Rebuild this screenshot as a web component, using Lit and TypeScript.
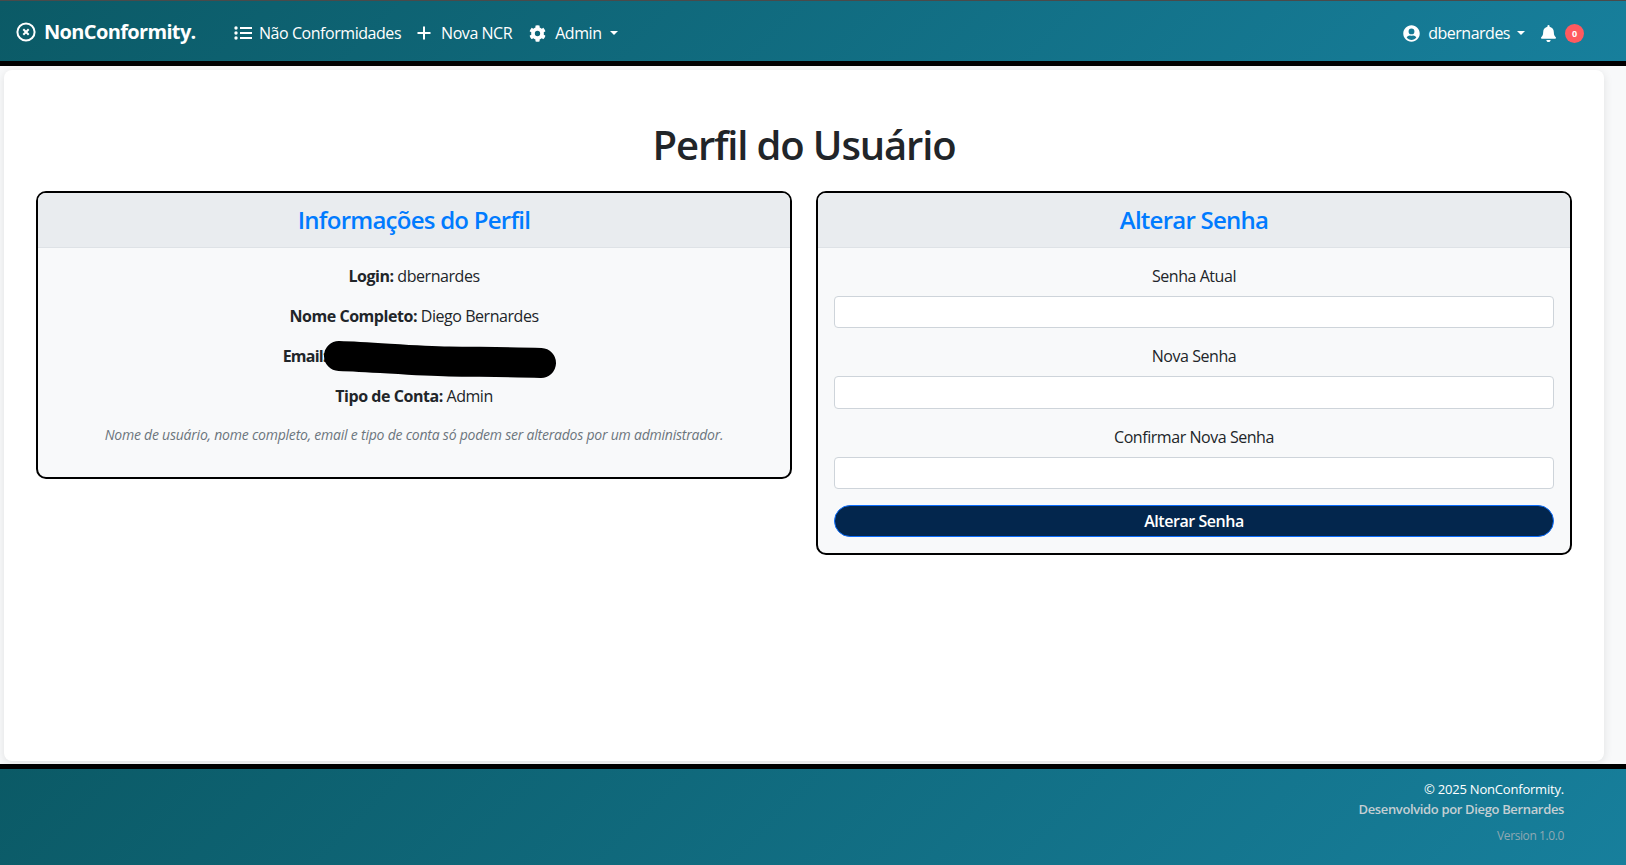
import { LitElement, html, css } from "lit";
import { customElement } from "lit/decorators.js";

@customElement("app-root")
export class AppRoot extends LitElement {
  static styles = css`
    :host { display: flex; flex-direction: column; height: 865px; overflow: hidden; background: #f8f9fa; color: #212529; font-family: "Open Sans", "Noto Sans", sans-serif; font-size: 16px; line-height: 24px; }
    * { box-sizing: border-box; }
    .nav { height: 66px; flex: none; display: flex; align-items: center; padding: 4px 42px 0 16px; color: #fff; border-top: 1px solid #4a4a4a; border-bottom: 5px solid #000; background: linear-gradient(135deg, #0b5a66, #177f9c); }
    .brand { display: flex; align-items: center; gap: 8px; font-size: 20px; font-weight: 700; letter-spacing: -0.65px; width: 218px; flex: none; margin-top: -3px; }
    .item { display: flex; align-items: center; gap: 7px; margin-right: 15px; letter-spacing: -0.45px; }
    .plus { gap: 9px; margin-right: 17px; }
    .gear { gap: 9px; }
    .user { gap: 8px; margin-right: 16px; letter-spacing: -0.5px; }
    .item svg, .brand svg { display: block; flex: none; }
    .caret { width: 0; height: 0; border-left: 4.5px solid transparent; border-right: 4.5px solid transparent; border-top: 4.5px solid #fff; margin-left: -1px; }
    .spacer { flex: 1; }
    .bell { display: block; margin-right: 9px; }
    .badge { width: 19px; height: 19px; border-radius: 50%; background: #ff5a5f; font-size: 9px; font-weight: 700; display: flex; align-items: center; justify-content: center; line-height: 1; }
    main { flex: 1; min-height: 0; padding: 4px 22px 3px 4px; display: flex; }
    .box { flex: 1; background: #fff; border-radius: 8px; box-shadow: 0 2px 10px rgba(0,0,0,.1); padding: 51px 32px 0; }
    h1 { margin: 0 0 22px; text-align: center; font-size: 40px; line-height: 48px; font-weight: 600; letter-spacing: -1.15px; }
    .cols { display: grid; grid-template-columns: 1fr 1fr; gap: 24px; align-items: start; }
    .card { border: 2px solid #000; border-radius: 10px; background: #f8f9fa; overflow: hidden; }
    .head { height: 55px; background: #e9ecef; border-bottom: 1px solid #dee2e6; display: flex; align-items: center; justify-content: center; color: #007bff; font-size: 24px; font-weight: 600; letter-spacing: -0.75px; }
    .body { padding: 16px; text-align: center; letter-spacing: -0.45px; }
    .row { margin: 0 0 16px; }
    b { font-weight: 700; }
    .email { letter-spacing: -0.8px; }
    .note { margin: 0 0 16px; font-size: 14px; font-style: italic; color: #6c757d; line-height: 21px; letter-spacing: -0.22px; }
    .mask { display: inline-block; position: relative; width: 215px; height: 16px; vertical-align: middle; }
    .mask svg { position: absolute; left: -6px; top: -9px; }
    label { display: block; margin-bottom: 8px; }
    input { display: block; width: 100%; height: 32.4px; margin-bottom: 16px; border: 1px solid #ced4da; border-radius: 4px; background: #fff; }
    button { display: block; width: 100%; height: 32px; border: 1px solid #0d6efd; border-radius: 16px; background: #03264d; color: #fff; font: 600 16px/24px "Open Sans", sans-serif; letter-spacing: -0.45px; }
    footer { height: 101px; flex: none; border-top: 5px solid #000; background: linear-gradient(135deg, #0b5a66, #177f9c); padding: 10px 62px 0 0; text-align: right; color: #fff; font-size: 13px; line-height: 20px; letter-spacing: -0.2px; }
    .dev { color: #c4cfd3; font-weight: 600; letter-spacing: -0.35px; }
    .ver { color: #8fa9b3; font-size: 12px; margin-top: 7px; letter-spacing: -0.4px; }
  `;
  render() {
    return html`
      <header class="nav">
        <div class="brand">
          <svg width="20" height="20" viewBox="0 0 20 20" fill="none" stroke="#fff"><circle cx="10" cy="10" r="8.6" stroke-width="2"/><path d="M7.3 7.3l5.4 5.4M12.7 7.3l-5.4 5.4" stroke-width="2"/></svg>
          NonConformity.
        </div>
        <div class="item">
          <svg width="18" height="16" viewBox="0 0 18 16" fill="#fff"><circle cx="2" cy="3" r="1.7"/><circle cx="2" cy="8" r="1.7"/><circle cx="2" cy="13" r="1.7"/><rect x="6" y="2" width="12" height="2"/><rect x="6" y="7" width="12" height="2"/><rect x="6" y="12" width="12" height="2"/></svg>
          Não Conformidades
        </div>
        <div class="item plus">
          <svg width="16" height="16" viewBox="0 0 16 16" fill="#fff"><rect x="7" y="1.5" width="2" height="13"/><rect x="1.5" y="7" width="13" height="2"/></svg>
          Nova NCR
        </div>
        <div class="item gear">
          <svg width="17" height="17" viewBox="0 0 512 512" fill="#fff"><path d="M487 316l-42-25a192 192 0 0 0 0-70l42-25c5-3 7-8 5-14-11-35-30-67-54-93-4-4-10-5-15-2l-42 24a188 188 0 0 0-61-35V28c0-6-4-11-9-12a220 220 0 0 0-108 0c-5 1-9 6-9 12v48a194 194 0 0 0-61 35L91 87c-5-3-11-2-15 2-24 26-43 58-54 93-2 6 0 11 5 14l42 25a192 192 0 0 0 0 70l-42 25c-5 3-7 8-5 14 11 35 30 67 54 93 4 4 10 5 15 2l42-24a188 188 0 0 0 61 35v48c0 6 4 11 9 12a220 220 0 0 0 108 0c5-1 9-6 9-12v-48a194 194 0 0 0 61-35l42 24c5 3 11 2 15-2 24-26 43-58 54-93 2-6 0-11-5-14zM256 336a80 80 0 1 1 0-160 80 80 0 0 1 0 160z"/></svg>
          Admin <span class="caret"></span>
        </div>
        <div class="spacer"></div>
        <div class="item user">
          <svg width="17" height="17" viewBox="0 0 496 512" fill="#fff"><path d="M248 8C111 8 0 119 0 256s111 248 248 248 248-111 248-248S385 8 248 8zm0 96a88 88 0 1 1 0 176 88 88 0 0 1 0-176zm0 344c-59 0-111-27-146-69 19-36 56-61 99-61 2 0 5 0 7 1 13 4 27 7 40 7s27-3 40-7c2-1 5-1 7-1 43 0 80 25 99 61-35 42-87 69-146 69z"/></svg>
          dbernardes <span class="caret"></span>
        </div>
        <svg class="bell" width="15" height="17" viewBox="0 0 448 512" fill="#fff"><path d="M224 512c35 0 64-29 64-64H160c0 35 29 64 64 64zm215-150c-19-21-55-52-55-154 0-78-54-140-128-155V32a32 32 0 0 0-64 0v21C118 68 64 130 64 208c0 102-36 133-55 154-6 6-9 14-9 22 0 16 13 32 32 32h384c19 0 32-16 32-32 0-8-3-16-9-22z"/></svg>
        <div class="badge">0</div>
      </header>
      <main>
        <div class="box">
          <h1>Perfil do Usuário</h1>
          <div class="cols">
            <section class="card">
              <div class="head">Informações do Perfil</div>
              <div class="body">
                <p class="row"><b>Login:</b> dbernardes</p>
                <p class="row"><b>Nome Completo:</b> Diego Bernardes</p>
                <p class="row"><b class="email">Email:</b> <span class="mask"><svg width="240" height="40" viewBox="0 0 240 40"><path d="M15 15 C50 16 90 20 125 20.5 S190 21 217 22" fill="none" stroke="#000" stroke-width="30" stroke-linecap="round"/></svg></span></p>
                <p class="row"><b>Tipo de Conta:</b> Admin</p>
                <p class="note">Nome de usuário, nome completo, email e tipo de conta só podem ser alterados por um administrador.</p>
              </div>
            </section>
            <section class="card">
              <div class="head">Alterar Senha</div>
              <div class="body">
                <label>Senha Atual</label><input type="password" />
                <label>Nova Senha</label><input type="password" />
                <label>Confirmar Nova Senha</label><input type="password" />
                <button>Alterar Senha</button>
              </div>
            </section>
          </div>
        </div>
      </main>
      <footer>
        <div>© 2025 NonConformity.</div>
        <div class="dev">Desenvolvido por Diego Bernardes</div>
        <div class="ver">Version 1.0.0</div>
      </footer>
    `;
  }
}
